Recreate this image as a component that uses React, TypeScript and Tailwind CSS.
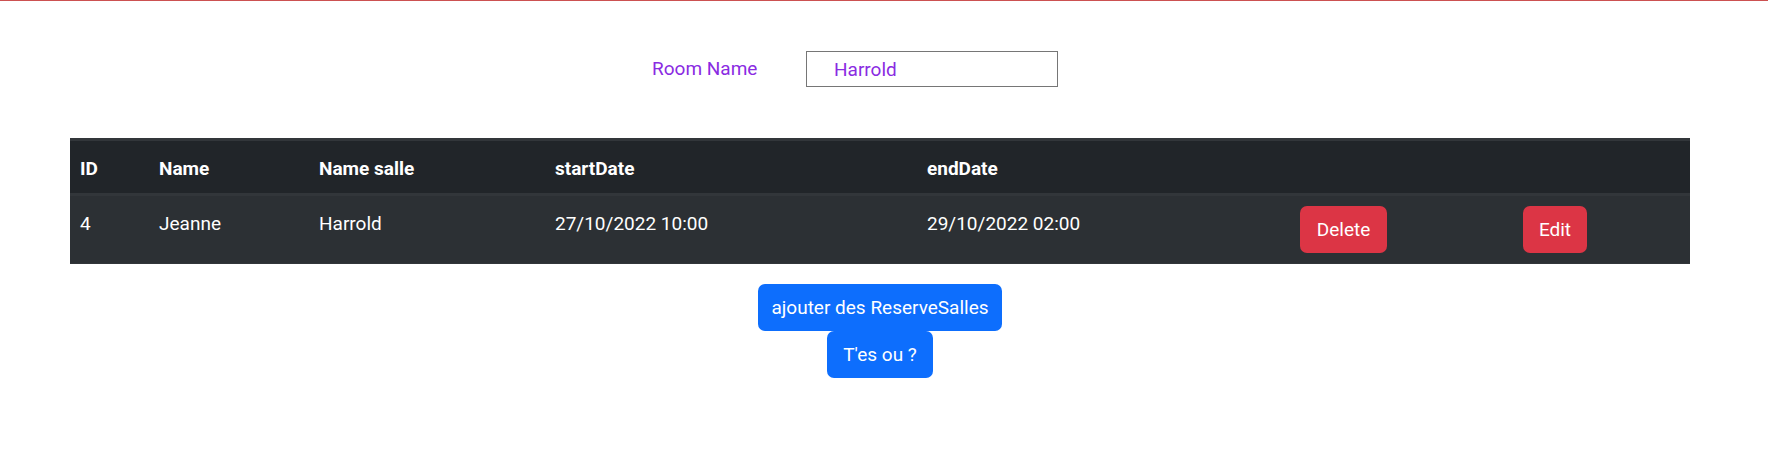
export default function App() {
  return (
    <div className="min-h-screen bg-white font-['Roboto','Liberation_Sans',sans-serif] text-[19px]">
      {/* Bande du haut */}
      <div className="h-px bg-[#cc5151]" />

      <div className="ml-[70px] w-[1620px]">
        {/* Filtre par salle */}
        <div className="flex justify-center items-center pr-[50px] pt-[50px]">
          <label className="w-[103px] shrink-0 whitespace-nowrap text-[#8a2be2] leading-[30px]">Room Name</label>
          <input
            className="ml-[51px] w-[252px] h-[36px] border border-[#767676] pl-[27px] text-[#8a2be2] leading-[30px] outline-none"
            defaultValue="Harrold"
          />
        </div>

        {/* Liste des réservations */}
        <table className="mt-[51px] w-[1620px] border-separate border-spacing-0 text-white text-left">
          <thead>
            <tr className="bg-[#212529]">
              <th className="w-[79px] align-top pl-[10px] pt-[13px] pb-[9px] leading-[30px] font-bold border-t-[3px] border-b-[3px] border-[#32363a]">ID</th>
              <th className="w-[160px] align-top pl-[10px] pt-[13px] pb-[9px] leading-[30px] font-bold border-t-[3px] border-b-[3px] border-[#32363a]">Name</th>
              <th className="w-[236px] align-top pl-[10px] pt-[13px] pb-[9px] leading-[30px] font-bold border-t-[3px] border-b-[3px] border-[#32363a]">Name salle</th>
              <th className="w-[372px] align-top pl-[10px] pt-[13px] pb-[9px] leading-[30px] font-bold border-t-[3px] border-b-[3px] border-[#32363a]">startDate</th>
              <th className="w-[373px] align-top pl-[10px] pt-[13px] pb-[9px] leading-[30px] font-bold border-t-[3px] border-b-[3px] border-[#32363a]">endDate</th>
              <th className="w-[223px] border-t-[3px] border-b-[3px] border-[#32363a]"></th>
              <th className="w-[177px] border-t-[3px] border-b-[3px] border-[#32363a]"></th>
            </tr>
          </thead>
          <tbody>
            <tr className="bg-[#2c3034]">
              <td className="align-top pl-[10px] pt-[13px] leading-[30px] border-b border-[#32363a]">4</td>
              <td className="align-top pl-[10px] pt-[13px] leading-[30px] border-b border-[#32363a]">Jeanne</td>
              <td className="align-top pl-[10px] pt-[13px] leading-[30px] border-b border-[#32363a]">Harrold</td>
              <td className="align-top pl-[10px] pt-[13px] leading-[30px] border-b border-[#32363a]">27/10/2022 10:00</td>
              <td className="align-top pl-[10px] pt-[13px] leading-[30px] border-b border-[#32363a]">29/10/2022 02:00</td>
              <td className="align-top pl-[10px] py-[10px] border-b border-[#32363a]">
                <button className="w-[87px] h-[47px] rounded-[7px] bg-[#dc3545] text-white leading-[30px]">Delete</button>
              </td>
              <td className="align-top pl-[10px] py-[10px] border-b border-[#32363a]">
                <button className="w-[64px] h-[47px] rounded-[7px] bg-[#dc3545] text-white leading-[30px]">Edit</button>
              </td>
            </tr>
          </tbody>
        </table>

        {/* Actions */}
        <div className="flex flex-col items-center pt-[20px]">
          <button className="w-[244px] h-[47px] rounded-[7px] bg-[#0d6efd] text-white leading-[30px]">ajouter des ReserveSalles</button>
          <button className="w-[106px] h-[47px] rounded-[7px] bg-[#0d6efd] text-white leading-[30px]">T'es ou ?</button>
        </div>
      </div>
    </div>
  );
}
